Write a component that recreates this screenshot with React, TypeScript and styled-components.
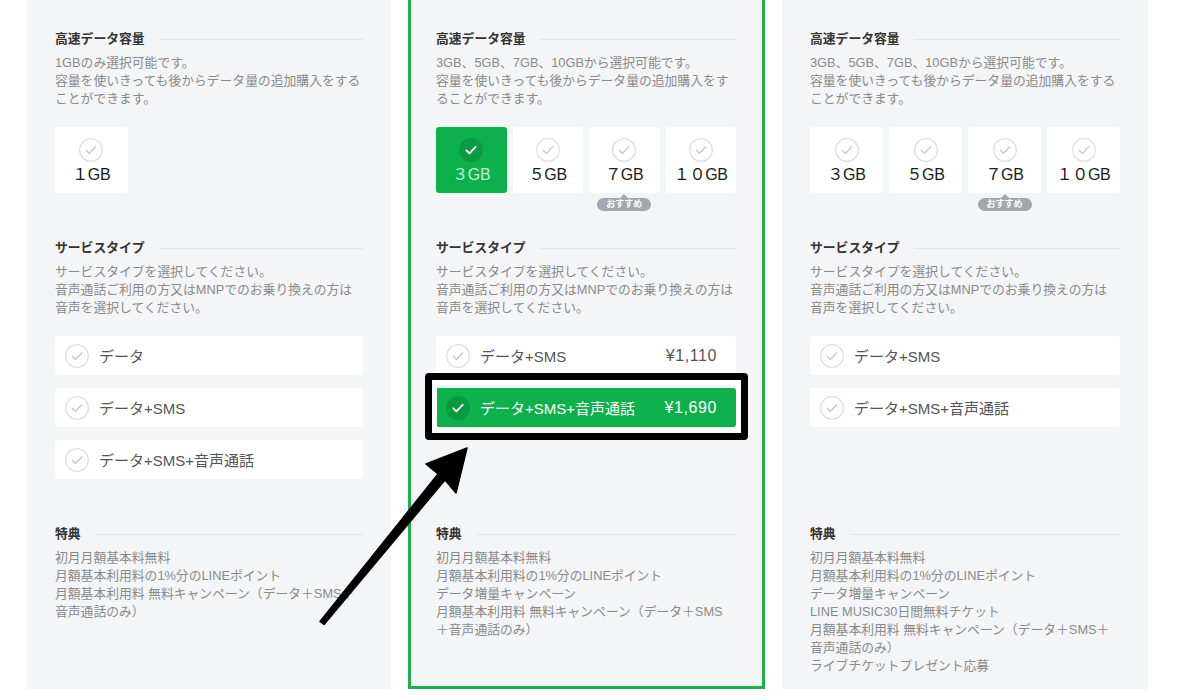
import React from 'react';
import styled, { createGlobalStyle } from 'styled-components';

const GREEN = '#0db14b';

type Plan = {
  capacityNote: string[];
  capacities: string[];
  selectedCapacity?: string;
  recommended?: string;
  services: { label: string; price?: string; selected?: boolean }[];
  perks: string[];
  featured?: boolean;
};

const serviceNote = [
  'サービスタイプを選択してください。',
  '音声通話ご利用の方又はMNPでのお乗り換えの方は',
  '音声を選択してください。',
];

const plans: Plan[] = [
  {
    capacityNote: ['1GBのみ選択可能です。', '容量を使いきっても後からデータ量の追加購入をする', 'ことができます。'],
    capacities: ['１GB'],
    services: [{ label: 'データ' }, { label: 'データ+SMS' }, { label: 'データ+SMS+音声通話' }],
    perks: [
      '初月月額基本料無料',
      '月額基本利用料の1%分のLINEポイント',
      '月額基本利用料 無料キャンペーン（データ＋SMS＋',
      '音声通話のみ）',
    ],
  },
  {
    featured: true,
    capacityNote: ['3GB、5GB、7GB、10GBから選択可能です。', '容量を使いきっても後からデータ量の追加購入をす', 'ることができます。'],
    capacities: ['３GB', '５GB', '７GB', '１０GB'],
    selectedCapacity: '３GB',
    recommended: '７GB',
    services: [
      { label: 'データ+SMS', price: '¥1,110' },
      { label: 'データ+SMS+音声通話', price: '¥1,690', selected: true },
    ],
    perks: [
      '初月月額基本料無料',
      '月額基本利用料の1%分のLINEポイント',
      'データ増量キャンペーン',
      '月額基本利用料 無料キャンペーン（データ＋SMS',
      '＋音声通話のみ）',
    ],
  },
  {
    capacityNote: ['3GB、5GB、7GB、10GBから選択可能です。', '容量を使いきっても後からデータ量の追加購入をする', 'ことができます。'],
    capacities: ['３GB', '５GB', '７GB', '１０GB'],
    recommended: '７GB',
    services: [{ label: 'データ+SMS' }, { label: 'データ+SMS+音声通話' }],
    perks: [
      '初月月額基本料無料',
      '月額基本利用料の1%分のLINEポイント',
      'データ増量キャンペーン',
      'LINE MUSIC30日間無料チケット',
      '月額基本利用料 無料キャンペーン（データ＋SMS＋',
      '音声通話のみ）',
      'ライブチケットプレゼント応募',
    ],
  },
];

const GlobalStyle = createGlobalStyle`
  html, body {
    margin: 0;
    background: #fff;
    overflow: hidden;
  }
  body {
    font-family: "Liberation Sans", "Noto Sans CJK JP", sans-serif;
    -webkit-font-smoothing: antialiased;
  }
`;

// the top of the plan cards scrolls out above the view
const Page = styled.div`
  position: relative;
  display: grid;
  grid-template-columns: 364px 357px 366px;
  column-gap: 17px;
  padding-left: 27px;
  margin-top: -20px;
  height: 709px;
`;

const Panel = styled.section<{ $featured?: boolean }>`
  background: #f4f5f7;
  padding: 50px 28px 0;
  ${(p) =>
    p.$featured &&
    `
    border: 3px solid #1fb24a;
    padding: 47px 26px 0 25px;
  `}
`;

const Section = styled.div`
  & + & {
    margin-top: 46px;
  }
`;

const Heading = styled.h3`
  display: flex;
  align-items: center;
  gap: 14px;
  margin: 0;
  font-size: 12.8px;
  line-height: 18px;
  font-weight: 700;
  color: #333;

  &::after {
    content: '';
    flex: 1;
    height: 1px;
    background: #e4e5e8;
  }
`;

const Note = styled.div`
  margin-top: 6px;
  font-size: 12.8px;
  line-height: 18px;
  color: #8a8a8a;

  span {
    display: block;
    white-space: nowrap;
  }
`;

const CapacityGrid = styled.div`
  display: grid;
  grid-template-columns: repeat(4, 1fr);
  gap: 6px;
  margin-top: 19px;
`;

const CapacityCard = styled.div<{ $on?: boolean }>`
  position: relative;
  height: 66px;
  display: flex;
  flex-direction: column;
  align-items: center;
  padding-top: 11px;
  box-sizing: border-box;
  border-radius: 3px;
  background: ${(p) => (p.$on ? GREEN : '#fff')};
`;

const CapacityLabel = styled.div<{ $on?: boolean }>`
  margin-top: 3px;
  font-size: 16px;
  line-height: 20px;
  letter-spacing: -0.3px;
  color: ${(p) => (p.$on ? '#c4f2d2' : '#1a1a1a')};
`;

const Badge = styled.div`
  position: absolute;
  top: calc(100% + 5px);
  left: 50%;
  transform: translateX(-50%);
  height: 13px;
  padding: 0 9px;
  border-radius: 7px;
  background: #a3a7ae;
  color: #fff;
  font-size: 9px;
  line-height: 13px;
  font-weight: 700;
  white-space: nowrap;

  &::before {
    content: '';
    position: absolute;
    top: -4px;
    left: 50%;
    margin-left: -4px;
    border-left: 4px solid transparent;
    border-right: 4px solid transparent;
    border-bottom: 4px solid #a3a7ae;
  }
`;

const OptionList = styled.div`
  display: flex;
  flex-direction: column;
  gap: 13px;
  min-height: 143px;
  margin-top: 19px;
`;

const Option = styled.div<{ $on?: boolean }>`
  display: flex;
  align-items: center;
  gap: 10px;
  height: 39px;
  padding: 0 19px 0 10px;
  border-radius: 3px;
  background: ${(p) => (p.$on ? GREEN : '#fff')};
  color: ${(p) => (p.$on ? '#fff' : '#555')};
  font-size: 15px;
`;

const Price = styled.span`
  margin-left: auto;
  font-size: 16px;
  letter-spacing: 0.6px;
`;

const Perks = styled(Note)`
  margin-top: 6px;
`;

const Highlight = styled.div`
  position: absolute;
  left: 425px;
  top: 393px;
  width: 323px;
  height: 67px;
  box-sizing: border-box;
  border: 7px solid #000;
  border-radius: 4px;
  box-shadow: inset 0 0 0 5px #fff;
  pointer-events: none;
`;

const Pointer = styled.svg`
  position: absolute;
  left: 0;
  top: 20px;
  pointer-events: none;
`;

const Check = ({ on }: { on?: boolean }) => (
  <svg width="24" height="24" viewBox="0 0 24 24" style={{ flex: 'none' }}>
    {on ? (
      <circle cx="12" cy="12" r="12" fill="#0a9a42" />
    ) : (
      <circle cx="12" cy="12" r="11.3" fill="#fff" stroke="#dedede" strokeWidth="1.3" />
    )}
    <path
      d="M7.3 12.3l3.1 3.1 6.3-6.6"
      fill="none"
      stroke={on ? '#fff' : '#c9c9c9'}
      strokeWidth={on ? 1.8 : 1.4}
      strokeLinecap="round"
      strokeLinejoin="round"
    />
  </svg>
);

const PlanCard = ({ plan }: { plan: Plan }) => (
  <Panel $featured={plan.featured}>
    <Section>
      <Heading>高速データ容量</Heading>
      <Note>
        {plan.capacityNote.map((l) => (
          <span key={l}>{l}</span>
        ))}
      </Note>
      <CapacityGrid>
        {plan.capacities.map((c) => {
          const on = c === plan.selectedCapacity;
          return (
            <CapacityCard key={c} $on={on}>
              <Check on={on} />
              <CapacityLabel $on={on}>{c}</CapacityLabel>
              {c === plan.recommended && <Badge>おすすめ</Badge>}
            </CapacityCard>
          );
        })}
      </CapacityGrid>
    </Section>

    <Section>
      <Heading>サービスタイプ</Heading>
      <Note>
        {serviceNote.map((l) => (
          <span key={l}>{l}</span>
        ))}
      </Note>
      <OptionList>
        {plan.services.map((s) => (
          <Option key={s.label} $on={s.selected}>
            <Check on={s.selected} />
            {s.label}
            {s.price && <Price>{s.price}</Price>}
          </Option>
        ))}
      </OptionList>
    </Section>

    <Section>
      <Heading>特典</Heading>
      <Perks>
        {plan.perks.map((l) => (
          <span key={l}>{l}</span>
        ))}
      </Perks>
    </Section>
  </Panel>
);

export default function App() {
  return (
    <>
      <GlobalStyle />
      <Page>
        {plans.map((p, i) => (
          <PlanCard key={i} plan={p} />
        ))}
        <Highlight />
        <Pointer width="1187" height="700" viewBox="0 0 1187 700">
          <polygon
            points="467,448 426,464 438,474 320,621.5 324,624.5 445,480 456,493"
            fill="#000"
            stroke="#000"
            strokeWidth="1.5"
            strokeLinejoin="round"
          />
        </Pointer>
      </Page>
    </>
  );
}
